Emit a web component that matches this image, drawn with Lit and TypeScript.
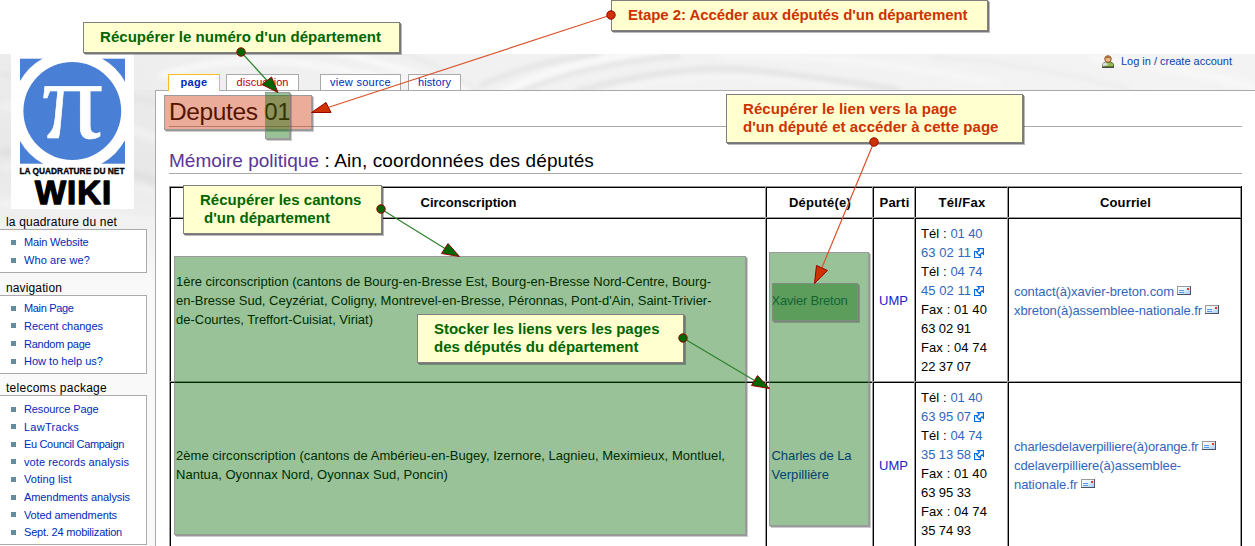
import { LitElement, html, svg, css } from "lit";
import { customElement, property } from "lit/decorators.js";

/** A single line of text, tracked so that it sets to a given measure. */
@customElement("set-line")
class SetLine extends LitElement {
  @property({ type: Number }) measure = 0;
  static styles = css`
    :host { display: inline-block; white-space: pre; }
  `;
  render() {
    return html`<slot></slot>`;
  }
  firstUpdated() {
    const n = (this.textContent || "").length;
    const natural = this.getBoundingClientRect().width;
    if (this.measure && n) {
      const gap = (this.measure - natural) / n;
      this.style.letterSpacing = gap.toFixed(3) + "px";
    }
  }
}

const line = (text: string, w: number) => html`<set-line measure=${w}>${text}</set-line>`;

const portlets = [
  { title: "la quadrature du net", w: 111, items: [["Main Website", 64.5], ["Who are we?", 66]] },
  { title: "navigation", w: 56, items: [["Main Page", 49.5], ["Recent changes", 79], ["Random page", 66.5], ["How to help us?", 79]] },
  {
    title: "telecoms package", w: 101,
    items: [["Resource Page", 74.5], ["LawTracks", 55], ["Eu Council Campaign", 100], ["vote records analysis", 105],
      ["Voting list", 47.5], ["Amendments analysis", 106], ["Voted amendments", 93], ["Sept. 24 mobilization", 98]],
  },
] as { title: string; w: number; items: [string, number][] }[];

const extIcon = html`<svg class="ext" width="10" height="10" viewBox="0 0 10 10">
  <path d="M3.500 3.500h-3v6h6v-3" fill="#fff" stroke="#0068e0" stroke-width="1.200" />
  <path d="M3.800.6h5.600v5.500L7.900 4.800 5.300 7.400 2.700 4.800 5.300 2.200z" fill="#fff" stroke="#0068e0" stroke-width="1.200" />
</svg>`;

const mailIcon = html`<svg class="mail" width="14" height="10" viewBox="0 0 14 10">
  <defs><linearGradient id="m" x2="1" y2="1"><stop offset="0" stop-color="#fff" /><stop offset=".4" stop-color="#eef5fd" /><stop offset="1" stop-color="#9cc6f2" /></linearGradient></defs>
  <rect x=".5" y=".5" width="13" height="8" fill="url(#m)" stroke="#9a9a9a" />
  <path d="M0 8.500h14M13.500 0v9" stroke="#4c5560" fill="none" />
  <path d="M2 4.500h5M2 6.500h5" stroke="#5a9ae6" />
  <path d="M10 2h2v2h-2z" fill="#f0342c" />
</svg>`;

const deputies = [
  {
    area: [["1ère circonscription (cantons de Bourg-en-Bresse Est, Bourg-en-Bresse Nord-Centre, Bourg-", 535],
      ["en-Bresse Sud, Ceyzériat, Coligny, Montrevel-en-Bresse, Péronnas, Pont-d'Ain, Saint-Trivier-", 535.5],
      ["de-Courtes, Treffort-Cuisiat, Viriat)", 197]],
    name: [["Xavier Breton", 76]],
    tel: [["01 40", "63 02 11"], ["04 74", "45 02 11"]],
    fax: [["01 40", "63 02 91"], ["04 74", "22 37 07"]],
    mail: [["contact(à)xavier-breton.com", 160, 1], ["xbreton(à)assemblee-nationale.fr", 188, 1]],
  },
  {
    area: [["2ème circonscription (cantons de Ambérieu-en-Bugey, Izernore, Lagnieu, Meximieux, Montluel,", 549],
      ["Nantua, Oyonnax Nord, Oyonnax Sud, Poncin)", 272]],
    name: [["Charles de La", 80], ["Verpillière", 57.5]],
    tel: [["01 40", "63 95 07"], ["04 74", "35 13 58"]],
    fax: [["01 40", "63 95 33"], ["04 74", "35 74 93"]],
    mail: [["charlesdelaverpilliere(à)orange.fr", 184.5, 1], ["cdelaverpilliere(à)assemblee-", 167, 0], ["nationale.fr", 63.5, 1]],
  },
] as any[];

const notes = [
  { k: "n-number green", lines: [["Récupérer le numéro d'un département", 281, ""]] },
  { k: "n-step red", lines: [["Etape 2: Accéder aux députés d'un département", 339.5, ""]] },
  { k: "n-link red", lines: [["Récupérer le lien vers la page", 214, ""], ["d'un député et accéder à cette page", 255.5, ""]] },
  { k: "n-cantons green", lines: [["Récupérer les cantons", 161.5, ""], ["d'un département", 126, "in"]] },
  { k: "n-store green", lines: [["Stocker les liens vers les pages", 225.5, ""], ["des députés du département", 204.5, ""]] },
] as any[];

const GREEN = "#006600";
const RED = "#cc3300";
const connectors = [
  { c: GREEN, l: "#2c832c", from: [241, 52], to: [267, 80.5], head: "271.5,77 262,84.5 278,92.5" },
  { c: RED, l: "#d9532b", from: [611, 15], to: [328, 107.5], head: "326,102.5 331,112.5 311.5,112.5" },
  { c: RED, l: "#d9532b", from: [874, 142], to: [822, 267.5], head: "816.5,265.5 827.5,270.5 814.5,283.5" },
  { c: GREEN, l: "#2c832c", from: [381, 209], to: [445, 248.5], head: "448,243.5 441.5,253.5 459.5,256.5" },
  { c: GREEN, l: "#2c832c", from: [683, 338], to: [754.5, 380.5], head: "757.5,375.5 751.5,385.5 769.5,388.5" },
];

@customElement("app-root")
class AppRoot extends LitElement {
  static styles = css`
    :host {
      display: block; position: relative; width: 1255px; height: 546px; overflow: hidden;
      background: #fff; font-family: "Liberation Sans", Arial, sans-serif; font-size: 13px; color: #000;
    }
    * { box-sizing: border-box; }
    .wiki { position: relative; margin-top: 54px; height: 492px; background: #f9f9f9; display: flex; }
    .backdrop { position: absolute; left: 0; top: 0; }
    .side { position: relative; width: 155px; flex: none; display: flex; flex-direction: column; }
    .logo { display: block; flex: none; margin-left: 11px; background: #fff; overflow: visible; }
    .portlet h5 { margin: 0 0 0 6px; font-weight: normal; font-size: 12px; line-height: 20px; height: 17px; }
    .portlet { margin-top: 5px; }
    .portlet:first-of-type { margin-top: 3px; }
    .portlet:last-of-type { margin-top: 4px; }
    .portlet ul { margin: 0; list-style: none; width: 147px; border: 1px solid #aaa; border-left: 0; background: #fff; padding: 3.7px 0 3px 11px; }
    .portlet:last-of-type ul { padding-top: 4.3px; }
    .portlet li { display: flex; align-items: center; gap: 8px; height: 17.6px; font-size: 11px; color: #002bb8; }
    .portlet li::before { content: ""; width: 5px; height: 5px; background: #638c9c; }
    .main { position: relative; flex: 1; display: flex; flex-direction: column; }
    .top { position: relative; flex: none; height: 36px; display: flex; align-items: flex-end; padding-left: 13px; font-size: 11px; }
    .tab { height: 16px; border: 1px solid #aaa; border-bottom: 0; background: #fff; text-align: center; line-height: 15px; color: #002bb8; margin-right: 6px; white-space: nowrap; }
    .t-page { width: 52px; border-color: #fabd23; font-weight: bold; height: 17px; margin-bottom: -1px; line-height: 15px; padding-bottom: 1px; z-index: 1; }
    .t-disc { width: 73px; color: #ba0000; margin-right: 21px; }
    .t-view { width: 81px; margin-right: 7px; }
    .t-hist { width: 53px; }
    .login { margin-left: auto; margin-right: 23px; align-self: flex-start; display: flex; align-items: center; height: 14px; gap: 7px; color: #0645ad; }
    .content { flex: 1; background: #fff; border: 1px solid #aaa; border-right: 0; border-bottom: 0; padding: 4px 13px 0 13px; }
    h1, h2 { margin: 0; font-weight: normal; border-bottom: 1px solid #aaa; white-space: nowrap; }
    h1 { font-size: 24.5px; line-height: 33px; height: 32px; }
    h2 { font-size: 19px; line-height: 22px; height: 32px; margin-top: 15px; padding-top: 8px; display: flex; }
    h2 .v { color: #5a3696; }
    .table { display: grid; grid-template-columns: 596px 107px 42px 93px 235px; grid-template-rows: 31px 164px 165px; margin-top: 12px; width: 1073px; border-right: 1px solid #000; box-shadow: inset -1px 0 #999; }
    .cell { border: 1px solid #999; border-right: 0; border-bottom: 0; box-shadow: inset 1px 1px #000; padding: 2px 0 0 6px; line-height: 19px; display: flex; flex-direction: column; justify-content: center; align-items: flex-start; white-space: nowrap; }
    .cell.last { margin-right: 1px; }
    .c2 { padding-left: 5.5px; }
    .tel { padding-top: 0; }
    .head { font-weight: bold; align-items: center; padding: 1px 0 0 2px; }
    .cell > div { height: 19px; }
    .link { color: #36b; }
    .party { color: #2222cc; }
    .deputy { color: #002bb8; }
    .visited { color: #3a5f8f; }
    .ext { margin-left: 3px; vertical-align: -1px; }
    .mail { margin-left: 3px; vertical-align: 0; }
    .mark, .note { position: absolute; border: 1px solid #808080; }
    .mark { border-color: #777b; box-shadow: 1px 1px 0 #7779, 2px 2px 0 #0003; }
    .mark.g { background: rgba(0, 102, 0, 0.4); background-clip: padding-box; }
    .mark.r { background: rgba(204, 51, 0, 0.4); background-clip: padding-box; }
    .m-title { left: 164px; top: 95px; width: 148px; height: 35px; }
    .m-number { left: 265px; top: 92px; width: 25px; height: 47px; }
    .m-cantons { left: 174px; top: 256px; width: 572px; height: 279px; }
    .m-names { left: 769px; top: 252px; width: 100px; height: 274px; }
    .m-name { left: 772px; top: 283px; width: 86px; height: 38px; }
    .note { background: #ffffd0; font-weight: bold; font-size: 15px; line-height: 18px; padding: 5px 0 0 16px; box-shadow: 1px 1px 0 #777, 2px 2px 0 #0004; white-space: nowrap; }
    .note div { height: 18px; }
    .green { color: #006600; }
    .red { color: #cc3300; }
    .in { padding-left: 4px; }
    .n-number { left: 83px; top: 22px; width: 317px; height: 31px; }
    .n-step { left: 611px; top: 0; width: 377px; height: 31px; }
    .n-link { left: 726px; top: 94px; width: 297px; height: 49px; }
    .n-cantons { left: 183px; top: 185px; width: 199px; height: 49px; }
    .n-store { left: 417px; top: 314px; width: 267px; height: 49px; }
    .wires { position: absolute; left: 0; top: 0; }
  `;

  backdrop() {
    return html`<svg class="backdrop" width="1255" height="230" viewBox="0 0 1255 230">
      <defs>
        <linearGradient id="fade" x2="0" y2="1"><stop offset="0" stop-color="#ececec" /><stop offset=".5" stop-color="#e8e8e8" /><stop offset="1" stop-color="#f9f9f9" /></linearGradient>
        <linearGradient id="right"><stop offset="0" stop-color="#f4f4f4" stop-opacity="0" /><stop offset=".35" stop-color="#f1f1f1" /><stop offset="1" stop-color="#f3f3f3" /></linearGradient>
        <filter id="soft" x="-10%" y="-50%" width="120%" height="200%"><feGaussianBlur stdDeviation="2.5" /></filter>
      </defs>
      <rect width="1255" height="230" fill="url(#fade)" />
      <rect width="1255" height="36" fill="url(#right)" />
      <g filter="url(#soft)" fill="none">
        <path d="M0 52Q80 58 160 85" stroke="#f0f0f0" stroke-width="10" />
        <path d="M0 98Q80 102 160 128" stroke="#e1e1e1" stroke-width="9" />
        <path d="M0 112Q80 118 160 140" stroke="#efefef" stroke-width="8" />
        <path d="M0 20Q80 28 160 50" stroke="#e4e4e4" stroke-width="5" />
        <path d="M0 150Q80 154 160 172" stroke="#f2f2f2" stroke-width="9" />
        <path d="M160 22Q240 -4 330 14T470 34" stroke="#f8f8f8" stroke-width="7" />
        <path d="M330 -4Q400 12 470 40" stroke="#fafafa" stroke-width="5" />
        <path d="M400 -2Q440 10 480 40" stroke="#e8e8e8" stroke-width="3" />
        <path d="M480 32Q530 8 600 0" stroke="#e1e1e1" stroke-width="4" />
        <path d="M500 40Q560 8 660 -4" stroke="#fafafa" stroke-width="6" />
        <path d="M516 40Q580 10 680 2" stroke="#dedede" stroke-width="3" />
        <path d="M575 38Q680 8 760 17T900 36" stroke="#e2e2e2" stroke-width="5" />
        <path d="M590 42Q680 18 760 24T860 40" stroke="#f5f5f5" stroke-width="5" />
        <path d="M720 2Q860 0 1000 30" stroke="#f7f7f7" stroke-width="6" />
        <path d="M930 2Q1040 10 1130 36" stroke="#ececec" stroke-width="4" />
        <path d="M1090 4Q1180 12 1255 34" stroke="#f8f8f8" stroke-width="8" />
      </g>
    </svg>`;
  }

  logo() {
    return html`<svg class="logo" width="123" height="155" viewBox="11 54 123 155">
      <rect x="20" y="58.7" width="105" height="105" fill="#497fd5" />
      <svg x="20" y="58" width="105" height="106" viewBox="20 58 105 106"><circle cx="72.3" cy="111" r="60.3" fill="#fff" /></svg>
      <circle cx="72.3" cy="111" r="48.9" fill="#497fd5" />
      <text x="42" y="138" font-family="Liberation Serif" font-size="113" textLength="61" lengthAdjust="spacingAndGlyphs" fill="#fff" stroke="#fff" stroke-width=".6">π</text>
      <text x="19.5" y="174.3" font-size="8.6" font-weight="bold" stroke="#000" stroke-width=".3" textLength="105" lengthAdjust="spacingAndGlyphs">LA QUADRATURE DU NET</text>
      <text x="35" y="203.6" font-size="34" font-weight="bold" stroke="#000" stroke-width="1.4" stroke-linejoin="round" letter-spacing="1" textLength="77" lengthAdjust="spacingAndGlyphs">WIKI</text>
    </svg>`;
  }

  deputyRow(d: any, i: number) {
    return html`
      <div class="cell">${d.area.map((a: any) => html`<div>${line(a[0], a[1])}</div>`)}</div>
      <div class="cell c2 ${i ? "deputy" : "visited"}">${d.name.map((a: any) => html`<div>${line(a[0], a[1])}</div>`)}</div>
      <div class="cell party"><div>${line("UMP", 29)}</div></div>
      <div class="cell tel">
        ${d.tel.map((t: any) => html`<div>${line("Tél : ", 29.5)}<span class="link">${line(t[0], 32)}</span></div><div class="link">${line(t[1], 50)}${extIcon}</div>`)}
        ${d.fax.map((t: any) => html`<div>${line("Fax : " + t[0], 66)}</div><div>${line(t[1], 50)}</div>`)}
      </div>
      <div class="cell last link">${d.mail.map((m: any) => html`<div>${line(m[0], m[1])}${m[2] ? mailIcon : ""}</div>`)}</div>`;
  }

  render() {
    return html`
      <div class="wiki">
        ${this.backdrop()}
        <aside class="side">
          ${this.logo()}
          ${portlets.map((p) => html`<section class="portlet"><h5>${line(p.title, p.w)}</h5>
            <ul>${p.items.map(([t, w]) => html`<li>${line(t, w)}</li>`)}</ul></section>`)}
        </aside>
        <main class="main">
          <nav class="top">
            <div class="tab t-page">${line("page", 27)}</div>
            <div class="tab t-disc">${line("discussion", 52)}</div>
            <div class="tab t-view">${line("view source", 61)}</div>
            <div class="tab t-hist">${line("history", 33)}</div>
            <div class="login">
              <svg width="12" height="13" viewBox="0 0 12 13">
                <path d="M.5 12V9.5Q1 7.500 4 7h4q3 .5 3.500 2.500V12z" fill="#8fc04c" stroke="#56603c" />
                <path d="M.5 11.500V9.500Q1 7.800 4 7.300L6 10z" fill="#ddd" />
                <circle cx="6" cy="4" r="3.3" fill="#efb98a" stroke="#8a5a2c" />
                <path d="M2.800 3.500Q4 .8 6 .9T9.200 3.500Q6 2.500 2.800 3.500z" fill="#a86f35" />
                <path d="M0 12.300h12" stroke="#333" />
              </svg>
              ${line("Log in / create account", 111)}
            </div>
          </nav>
          <div class="content">
            <h1>${line("Deputes 01", 121.5)}</h1>
            <h2><span class="v">${line("Mémoire politique", 150)}</span>${line(" : Ain, coordonnées des députés", 275)}</h2>
            <div class="table">
              <div class="cell head">${line("Circonscription", 96)}</div>
              <div class="cell head">${line("Député(e)", 62)}</div>
              <div class="cell head">${line("Parti", 30)}</div>
              <div class="cell head">${line("Tél/Fax", 47)}</div>
              <div class="cell head last">${line("Courriel", 51)}</div>
              ${deputies.map((d, i) => this.deputyRow(d, i))}
            </div>
          </div>
        </main>
      </div>
      <div class="mark r m-title"></div>
      <div class="mark g m-number"></div>
      <div class="mark g m-cantons"></div>
      <div class="mark g m-names"></div>
      <div class="mark g m-name"></div>
      ${notes.map((n) => html`<div class="note ${n.k}">${n.lines.map((l: any) => html`<div class=${l[2]}>${line(l[0], l[1])}</div>`)}</div>`)}
      <svg class="wires" width="1255" height="546">
        ${connectors.map((c) => svg`
          <line x1=${c.from[0]} y1=${c.from[1]} x2=${c.to[0]} y2=${c.to[1]} stroke=${c.l} stroke-width="1.2" />
          <circle cx=${c.from[0]} cy=${c.from[1]} r="4.2" fill=${c.c} stroke="#990000" />
          <polygon points=${c.head} fill=${c.c} stroke="#990000" />`)}
      </svg>`;
  }
}
